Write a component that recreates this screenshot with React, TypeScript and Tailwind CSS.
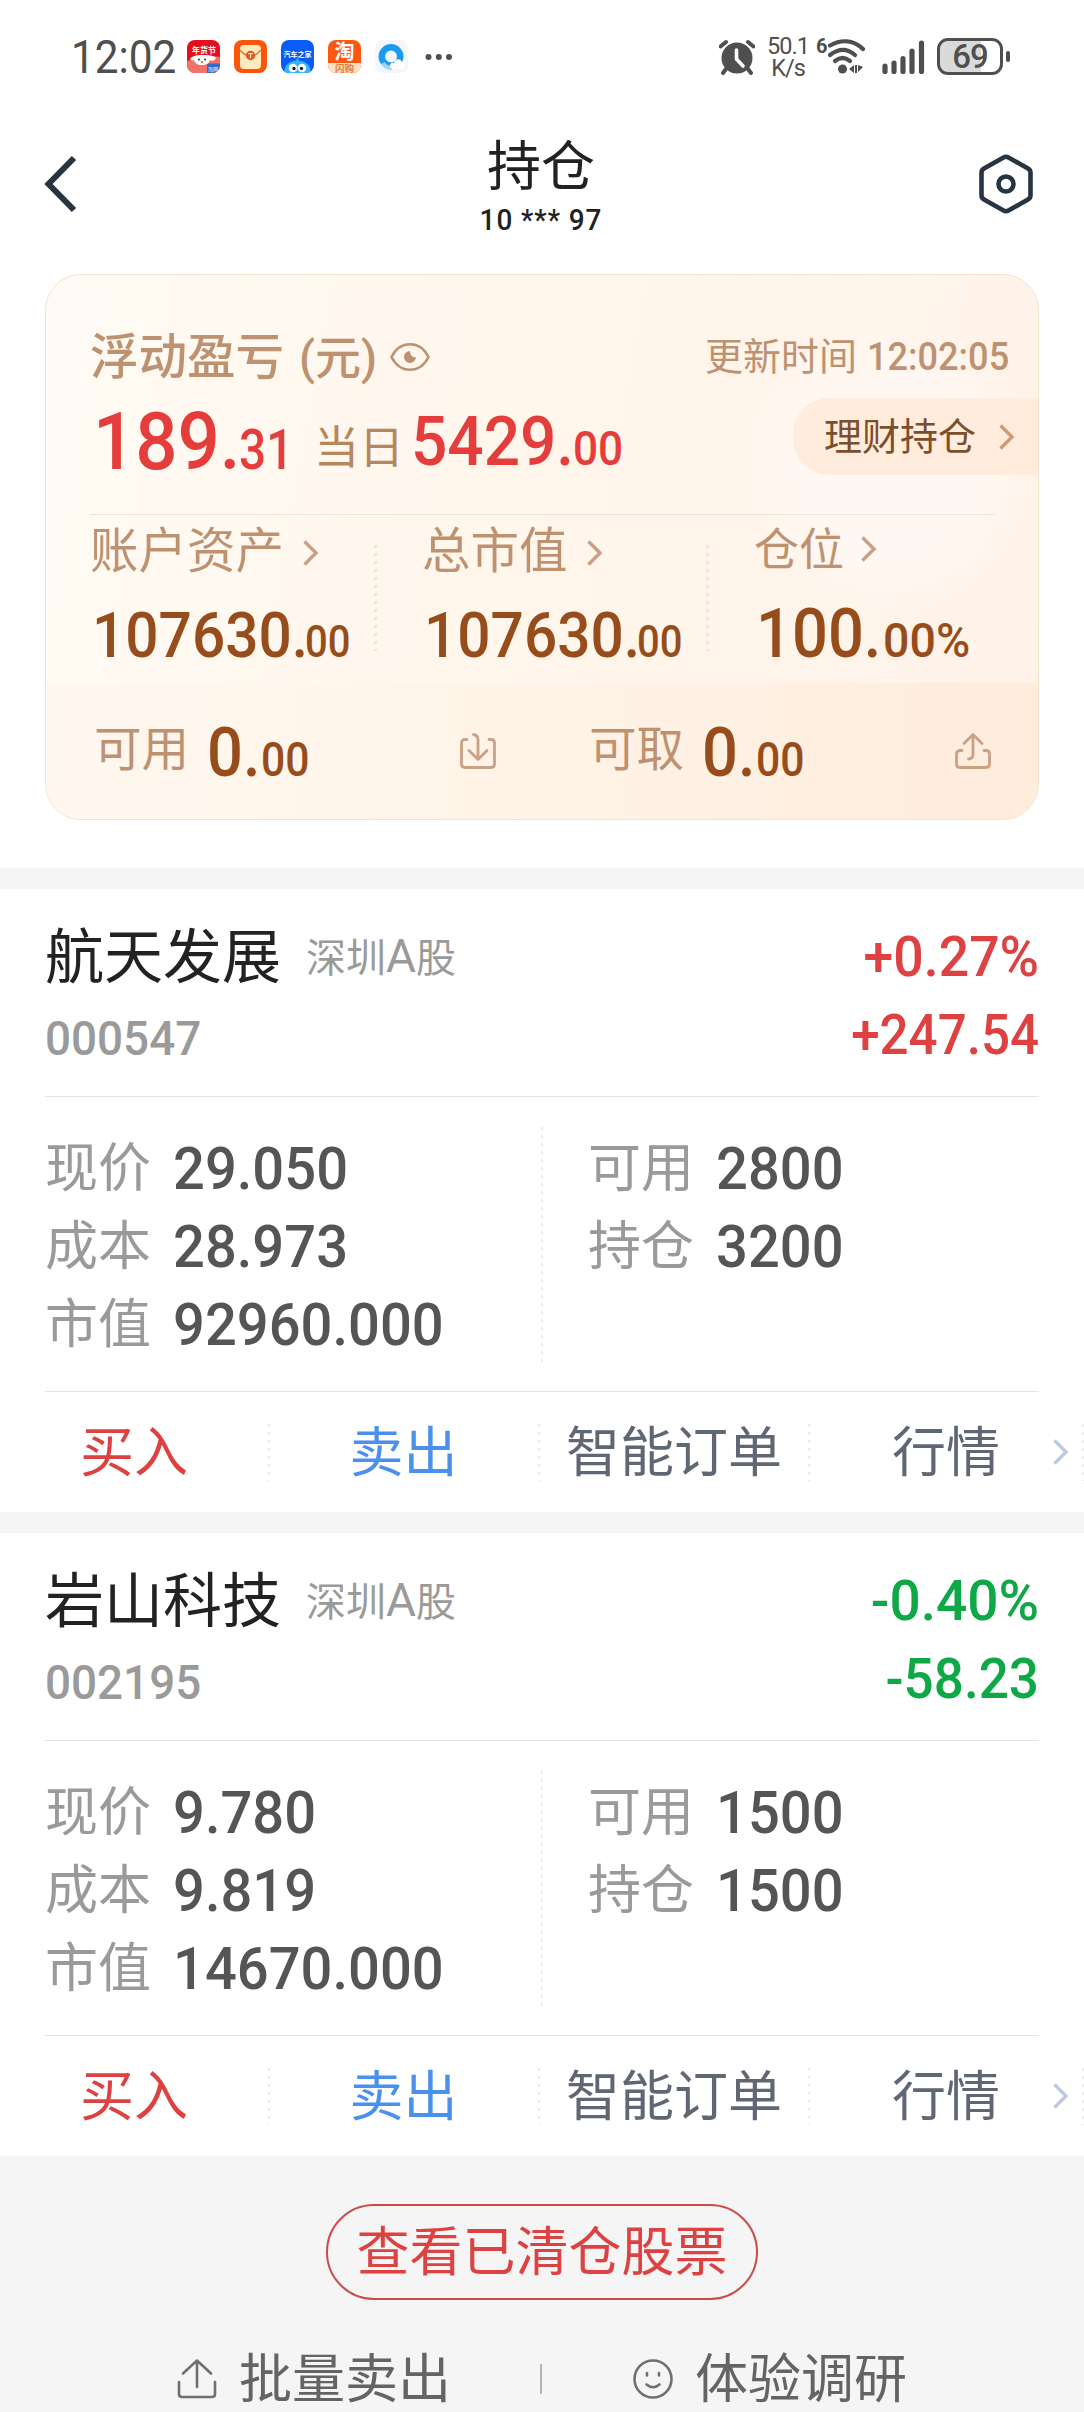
import React from "react";

type NumProps = { children: React.ReactNode; className: string; fit?: string };

function Num({ children, className, fit = "origin-left scale-x-[0.93]" }: NumProps) {
  return (
    <span className={`block shrink-0 leading-none whitespace-nowrap ${className}`}>
      <span className={`block w-max ${fit}`}>{children}</span>
    </span>
  );
}

function Chevron({ className }: { className: string }) {
  return (
    <svg viewBox="0 0 16 26" className={`h-[26px] w-4 shrink-0 ${className}`} fill="none" stroke="currentColor" strokeWidth="3.4">
      <path d="M1.5 1.5 13 13 1.5 24.5" />
    </svg>
  );
}

function StatusBar() {
  return (
    <div className="flex h-[113px] shrink-0 items-center pl-[71px] text-[#4f4f4f]">
      <Num className="mt-[1px] w-[116px] text-[46px]" fit="origin-left scale-x-[0.92]">12:02</Num>
      <div className="flex gap-[14px]">
        <svg viewBox="0 0 33 33" className="size-[33px]">
          <defs><clipPath id="appA"><rect width="33" height="33" rx="8" /></clipPath></defs>
          <g clipPath="url(#appA)">
            <rect width="33" height="33" fill="#e30f1c" />
            <path d="M0 21 8 19 16 24 26 16 33 17V33H0Z" fill="#f4716a" />
            <text x="5" y="13" fontSize="8" fontWeight="700" fill="#fff" fontFamily="Noto Sans CJK SC, sans-serif">年货节</text>
            <path d="M3 19c2-3 6-4 12-4s11 0 14 3c-2 3-4 3-6 2-1 3-3 5-8 5s-7-2-8-5c-2 1-3 0-4-1Z" fill="#fff" />
            <circle cx="12" cy="19.500" r="1" fill="#333" /><circle cx="18" cy="19.500" r="1" fill="#333" />
            <path d="M13.500 21.500h3l-1.500 2z" fill="#d33" />
            <path d="M20 25q0-1.500 1.500-1.500H33V33H20Z" fill="#2d6bd0" />
            <text x="21" y="30.500" fontSize="5" fill="#fff" fontFamily="Noto Sans CJK SC, sans-serif">淘网</text>
          </g>
        </svg>
        <svg viewBox="0 0 33 33" className="size-[33px]">
          <rect width="33" height="33" rx="8" fill="#f9560b" />
          <rect x="6" y="5" width="21" height="24" rx="4" fill="#ffe9bd" />
          <path d="M6 10c4 5 7 6 10.500 6S23 15 27 10" fill="none" stroke="#e0702a" strokeWidth="1.300" />
          <circle cx="16.500" cy="15.500" r="4.700" fill="#e2581d" />
          <path d="M14.200 13.700h4.600M16.500 13.700v4.500" stroke="#ffe9bd" strokeWidth="1.200" />
        </svg>
        <svg viewBox="0 0 33 33" className="size-[33px]">
          <defs><clipPath id="appC"><rect width="33" height="33" rx="8" /></clipPath></defs>
          <g clipPath="url(#appC)">
            <rect width="33" height="33" fill="#0b5bf6" />
            <text x="2.500" y="17" fontSize="7" fontWeight="700" fill="#fff" fontFamily="Noto Sans CJK SC, sans-serif">汽车之家</text>
            <path d="M16.500 18.500v3" stroke="#3cc1ff" strokeWidth="2" />
            <ellipse cx="16.500" cy="31" rx="13" ry="10.500" fill="#31b5fa" />
            <circle cx="12" cy="28" r="4.300" fill="#fff" /><circle cx="21" cy="28" r="4.300" fill="#fff" />
            <circle cx="13" cy="28.500" r="1.700" fill="#123" /><circle cx="20.500" cy="28.500" r="1.700" fill="#123" />
          </g>
        </svg>
        <svg viewBox="0 0 33 33" className="size-[33px]">
          <defs><clipPath id="appD"><rect width="33" height="33" rx="8" /></clipPath></defs>
          <g clipPath="url(#appD)">
            <rect width="33" height="33" fill="#fb5710" />
            <rect y="23" width="33" height="10" fill="#fde0c8" />
            <text x="6.500" y="19" fontSize="20" fontWeight="700" fill="#fff" fontFamily="Noto Sans CJK SC, sans-serif">淘</text>
            <text x="7" y="31.500" fontSize="9.500" fontWeight="700" fill="#e8772e" fontFamily="Noto Sans CJK SC, sans-serif">闪购</text>
          </g>
        </svg>
        <svg viewBox="0 0 33 33" className="size-[33px]">
          <rect width="33" height="33" rx="8" fill="#f3f7fb" />
          <circle cx="16" cy="16.500" r="9.200" fill="none" stroke="#1a9af0" strokeWidth="6.500" />
          <path d="M8 23c2 4 5 5 9 5" fill="none" stroke="#9bd5fb" strokeWidth="4" />
          <path d="M17 29c-4-2-2-7 2-6 1-5 8-5 8 0 4 0 4 6 0 6Z" fill="#fff" />
        </svg>
      </div>
      <svg viewBox="0 0 28 6" className="ml-[17px] h-[6px] w-7" fill="currentColor">
        <circle cx="3.500" cy="3" r="3" /><circle cx="13.800" cy="3" r="3" /><circle cx="24" cy="3" r="3" />
      </svg>
      <svg viewBox="0 0 36 36" className="ml-[266px] size-9">
        <circle cx="18" cy="19" r="15.500" fill="#4f4f4f" />
        <path d="M7 30 4 34M29 30l3 4" stroke="#4f4f4f" strokeWidth="4" strokeLinecap="round" />
        <path d="M1.500 7.500 7 3M34.500 7.500 29 3" stroke="#4f4f4f" strokeWidth="4" strokeLinecap="round" />
        <path d="M17.500 11v9l6.500 7" fill="none" stroke="#fff" strokeWidth="3.600" strokeLinecap="round" />
      </svg>
      <div className="ml-3 flex w-[42px] flex-col items-center text-[23.5px] leading-[22px] tracking-[-1px] text-[#4f4f4f]">
        <span>50.1</span>
        <span>K/s</span>
      </div>
      <span className="mb-[21px] ml-[7px] w-[11px] text-[20px] leading-none font-bold">6</span>
      <svg viewBox="0 0 40 36" className="h-9 w-10" fill="none" stroke="#4f4f4f" strokeWidth="4.200" strokeLinecap="round">
        <path d="M3 6.500C14 .5 26 .5 36 10" />
        <path d="M3 16c9-7 17-7 25 0" />
        <path d="M8 22c5-4 10-4 15 0" />
        <circle cx="15.500" cy="30" r="4.500" fill="#4f4f4f" stroke="none" />
        <path d="m22 30 5-4v8zM28 26h2v8h-2zM31 26l5 2-5 5z" fill="#4f4f4f" stroke="none" />
      </svg>
      <svg viewBox="0 0 44 36" className="ml-[14px] h-9 w-11" stroke="#4f4f4f" strokeWidth="5.200" strokeLinecap="round">
        <path d="M4 27v5.500M13 24v8.500M22 19.500v13M31 12v20.500M40.500 4v28.500" />
      </svg>
      <div className="ml-[12px] flex h-[37px] w-[66px] items-center justify-center rounded-[11px] border-[3px] border-[#4f4f4f] bg-[linear-gradient(90deg,#dadada_69%,#ffffff_69%)] text-[33px] leading-none font-medium tracking-[-1px]">
        69
      </div>
      <div className="ml-[3px] h-[11px] w-1 rounded-full bg-[#4f4f4f]" />
    </div>
  );
}

function Header() {
  return (
    <div className="flex h-[161px] shrink-0 items-start justify-between pr-[50px] pl-[44px] text-[#222]">
      <svg viewBox="0 0 60 60" className="mt-[41px] size-[60px]" fill="none" stroke="#263541" strokeWidth="6">
        <path d="M30 4 4.500 30 30 56" />
      </svg>
      <div className="flex flex-col items-center">
        <h1 className="mt-[28px] text-[54px] leading-none">持仓</h1>
        <Num className="mt-[10px] text-[30px] font-medium" fit="origin-center scale-x-[0.93] tracking-[1px]">10 *** 97</Num>
      </div>
      <svg viewBox="0 0 56 60" className="mt-[41px] h-[60px] w-14" fill="none" stroke="#263541" strokeWidth="4.600" strokeLinejoin="round">
        <path d="M25.500 3.500q2.500-1.500 5 0l19.500 11q2.500 1.500 2.500 4v23q0 2.500-2.500 4l-19.500 11q-2.500 1.500-5 0L6 45.500q-2.500-1.500-2.500-4v-23q0-2.500 2.500-4Z" />
        <circle cx="28" cy="30" r="7.500" />
      </svg>
    </div>
  );
}

const dottedTan = "bg-[repeating-linear-gradient(180deg,#f0e2d6_0_3px,transparent_3px_8px)]";
const dottedGray = "bg-[repeating-linear-gradient(180deg,#ececec_0_3px,transparent_3px_8px)]";

function Asset({ label, whole, cents, large }: { label: string; whole: string; cents: string; large?: boolean }) {
  return (
    <div className="flex w-[332px] shrink-0">
      <div className="w-[284px] shrink-0">
        <div className="flex h-[64px] items-center pt-[11px] text-[#be9270]">
          <span className={large ? "-mt-1 text-[45px] leading-none" : "text-[48.500px] leading-none"}>{label}</span>
          <Chevron className={large ? "-mt-2 ml-[17px] text-[#c9a084]" : "ml-[19px] text-[#c9a084]"} />
        </div>
        <div className="flex h-[89px] items-end pl-[2px] font-medium text-[#964d1b]">
          {large ? (
            <>
              <Num className="w-[127px] text-[68px]">{whole}</Num>
              <Num className="mb-[3px] w-[90px] text-[48px]" fit="origin-left scale-x-[0.97]">{cents}</Num>
            </>
          ) : (
            <>
              <Num className="mb-[1px] w-[213px] text-[63px]">{whole}</Num>
              <Num className="mb-[4px] text-[45px]" fit="origin-left scale-x-[0.89]">{cents}</Num>
            </>
          )}
        </div>
      </div>
      {!large && <div className={`mt-[30px] h-[106px] w-[3px] ${dottedTan}`} />}
    </div>
  );
}

function Cash({ label, children }: { label: string; children: React.ReactNode }) {
  return (
    <div className="flex w-[495px] shrink-0 items-center">
      <span className="w-[95px] text-[47.5px] leading-none whitespace-nowrap text-[#be9270]">{label}</span>
      <div className="mt-[3px] ml-[18px] flex items-end font-medium text-[#964d1b]">
        <Num className="w-[54px] text-[68px]">0.</Num>
        <Num className="mb-[3px] w-[50px] text-[48px]" fit="origin-left scale-x-[0.89]">00</Num>
      </div>
      <div className="ml-[149px]">{children}</div>
    </div>
  );
}

function Summary() {
  return (
    <div className="mx-[45px] flex h-[546px] shrink-0 flex-col overflow-hidden rounded-[36px] border border-[#f4e3cb] bg-[radial-gradient(circle_150px_at_840px_190px,#fff8f2_60%,transparent_100%),linear-gradient(100deg,#fffbf4_0%,#fff6ec_45%,#fff3e9_100%)]">
      <div className="flex h-[239px] shrink-0 justify-between pl-[44px]">
        <div>
          <div className="mt-[58px] flex h-12 items-center text-[#be9270]">
            <span className="pt-[2px] text-[48.500px] leading-none font-medium">浮动盈亏</span>
            <Num className="w-[106px] pt-[2px] pl-[15px] text-[46px] font-medium" fit="origin-left">(元)</Num>
            <svg viewBox="0 0 40 30" className="h-[30px] w-10 shrink-0" fill="none" stroke="currentColor" strokeWidth="2.600">
              <path d="M1.500 15C10 -2 30 -2 38.500 15 30 32 10 32 1.500 15Z" />
              <path d="M20 9a6 6 0 1 0 6 6c-3 1-6-2-6-6Z" fill="currentColor" stroke="none" />
            </svg>
          </div>
          <div className="mt-[21px] flex h-[80px] items-end font-medium text-[#e53c3c]">
            <Num className="w-[149px] pl-[3px] text-[80px]">189.</Num>
            <Num className="mb-[4px] w-[75px] text-[55px]" fit="origin-left scale-x-[0.87]">31</Num>
            <span className="mb-[11px] w-[97px] text-[45px] leading-none font-normal text-[#b4875f]">当日</span>
            <Num className="mb-[6px] w-[162px] text-[68px]" fit="origin-left scale-x-[0.94]">5429.</Num>
            <Num className="mb-[9px] text-[48px]" fit="origin-left scale-x-[0.92]">00</Num>
          </div>
        </div>
        <div className="flex flex-col items-end">
          <div className="mt-[63px] mr-[28px] flex items-center text-[#be9270]">
            <span className="text-[38px] leading-none">更新时间</span>
            <Num className="ml-[10px] w-[143px] text-[38px] font-medium" fit="origin-left scale-x-[0.95]">12:02:05</Num>
          </div>
          <div className="mt-[22px] flex h-[77px] w-[245px] items-center rounded-l-[36px] bg-[#ffecdc] pt-[1px] pl-[31px] text-[38px] leading-none text-[#7d4e2a]">
            理财持仓
            <Chevron className="ml-[23px] text-[#cb9c78]" />
          </div>
        </div>
      </div>
      <div className="ml-[44px] h-px w-[905px] shrink-0 bg-[#f0e4da]" />
      <div className="flex h-[168px] shrink-0 pl-[44px]">
        <Asset label="账户资产" whole="107630." cents="00" />
        <Asset label="总市值" whole="107630." cents="00" />
        <Asset label="仓位" whole="100." cents="00%" large />
      </div>
      <div className="flex flex-1 items-center bg-[linear-gradient(90deg,#fff8f0,#fff3e7_50%,#feecdc)] pl-[48px]">
        <Cash label="可用">
          <svg viewBox="0 0 36 36" className="size-9" fill="none" stroke="#cba184" strokeWidth="2.800" strokeLinecap="round" strokeLinejoin="round">
            <path d="M7 6.500H5Q1.500 6.500 1.500 10V31Q1.500 34.500 5 34.500H31Q34.500 34.500 34.500 31V10Q34.500 6.500 31 6.500H29" />
            <path d="M13.500 1.500Q18 2 18 7V26M9 17.500l9 9 9-9" />
          </svg>
        </Cash>
        <Cash label="可取">
          <svg viewBox="0 0 36 36" className="size-9" fill="none" stroke="#cba184" strokeWidth="2.800" strokeLinecap="round" strokeLinejoin="round">
            <path d="M7 17.500H5Q1.500 17.500 1.500 21V31Q1.500 34.500 5 34.500H31Q34.500 34.500 34.500 31V21Q34.500 17.500 31 17.500H29" />
            <path d="M13.500 26Q18 26 18 21V2M9 10.500l9-9 9 9" />
          </svg>
        </Cash>
      </div>
    </div>
  );
}

type Stock = {
  name: string;
  code: string;
  pct: string;
  gain: string;
  tone: string;
  left: [string, string][];
  right: [string, string][];
};

const stocks: Stock[] = [
  {
    name: "航天发展", code: "000547", pct: "+0.27%", gain: "+247.54", tone: "text-[#dd4141]",
    left: [["现价", "29.050"], ["成本", "28.973"], ["市值", "92960.000"]],
    right: [["可用", "2800"], ["持仓", "3200"]],
  },
  {
    name: "岩山科技", code: "002195", pct: "-0.40%", gain: "-58.23", tone: "text-[#0fa847]",
    left: [["现价", "9.780"], ["成本", "9.819"], ["市值", "14670.000"]],
    right: [["可用", "1500"], ["持仓", "1500"]],
  },
];

function Figures({ rows }: { rows: [string, string][] }) {
  return (
    <div className="pt-[31px]">
      {rows.map(([label, value]) => (
        <div key={label} className="flex h-[78px] items-center">
          <span className="w-[128px] pt-[4px] text-[53px] leading-none text-[#9a9a9a]">{label}</span>
          <Num className="mt-[3px] text-[60px] font-medium text-[#555]" fit="origin-left scale-x-[0.935]">{value}</Num>
        </div>
      ))}
    </div>
  );
}

function Holding({ stock }: { stock: Stock }) {
  const falling = stock.gain.startsWith("-");
  return (
    <section className="h-[623px] shrink-0 overflow-hidden bg-white">
      <div className="mx-[45px] flex h-[208px] justify-between border-b border-[#e5e5e5]">
        <div className="pt-[39px]">
          <div className="flex h-[59px] items-center">
            <h2 className="text-[59px] leading-none text-[#222]">{stock.name}</h2>
            <Num className="mb-[3px] ml-[25px] text-[40px] text-[#9a9a9a]" fit="flex items-baseline">
              深圳<span className="text-[46px]">A</span>股
            </Num>
          </div>
          <Num className="mt-[27px] text-[49px] font-medium text-[#9a9a9a]" fit="origin-left scale-x-[0.935]">{stock.code}</Num>
        </div>
        <div className={`flex flex-col items-end pt-[41px] font-medium ${stock.tone}`}>
          <Num className="text-[55px]" fit={falling ? "origin-right scale-x-[1]" : "origin-right scale-x-[0.975]"}>{stock.pct}</Num>
          <Num className="mt-[23px] text-[55px]" fit={falling ? "origin-right scale-x-[0.965]" : "origin-right scale-x-[0.93]"}>{stock.gain}</Num>
        </div>
      </div>
      <div className="mx-[45px] flex h-[295px] border-b border-[#e5e5e5]">
        <div className="w-[496px]"><Figures rows={stock.left} /></div>
        <div className={`mt-[30px] h-[235px] w-[2px] ${dottedGray}`} />
        <div className="ml-[45px]"><Figures rows={stock.right} /></div>
      </div>
      <div className="flex h-[120px] items-center text-[54px] leading-none text-[#5f6674]">
        <span className="w-[268px] pt-[4px] text-center text-[#dd4141]">买入</span>
        <div className={`h-[57px] w-[2px] ${dottedGray}`} />
        <span className="w-[267px] pt-[4px] text-center text-[#4a90ee]">卖出</span>
        <div className={`ml-[1px] h-[57px] w-[2px] ${dottedGray}`} />
        <span className="w-[268px] pt-[4px] text-center">智能订单</span>
        <div className={`h-[57px] w-[2px] ${dottedGray}`} />
        <span className="ml-[82px] w-[108px] pt-[4px]">行情</span>
        <Chevron className="ml-[53px] text-[#bccbdb]" />
        <div className={`ml-[13px] h-[57px] w-[2px] ${dottedGray}`} />
      </div>
    </section>
  );
}

function Footer() {
  return (
    <footer className="flex flex-1 flex-col items-center bg-[#f5f5f5] pt-[48px]">
      <button className="flex h-24 w-[432px] items-center justify-center rounded-full border-2 border-[#cc4a4a] pt-[3px] text-[53px] leading-none text-[#dd4141]">
        查看已清仓股票
      </button>
      <div className="mt-[50px] flex w-full items-center pl-[177px] text-[53px] leading-none text-[#646464]">
        <svg viewBox="0 0 40 40" className="size-10" fill="none" stroke="#707070" strokeWidth="2.600" strokeLinecap="round" strokeLinejoin="round">
          <path d="M2 23V35Q2 38 5 38H35Q38 38 38 35V23M20 28V2M6 14.500 20 1.500 34 14.500" />
        </svg>
        <span className="ml-[22px] w-[213px] pt-[4px]">批量卖出</span>
        <div className="ml-[88px] h-[30px] w-[2px] bg-[#b5b5b5]" />
        <svg viewBox="0 0 40 40" className="ml-[91px] size-10" fill="none" stroke="#707070" strokeWidth="2.600" strokeLinecap="round">
          <circle cx="20" cy="20" r="18.500" />
          <path d="M14 14v2.500M26 14v2.500M13.500 25.500q6.500 5.500 13 0" />
        </svg>
        <span className="ml-[22px] pt-[4px]">体验调研</span>
      </div>
    </footer>
  );
}

export default function App() {
  return (
    <main className="flex h-[2412px] w-[1084px] flex-col overflow-hidden bg-white font-[Roboto,'Noto_Sans_CJK_SC',sans-serif]">
      <StatusBar />
      <Header />
      <Summary />
      <div className="mt-[48px] h-[21px] shrink-0 bg-[#f5f5f5]" />
      <Holding stock={stocks[0]} />
      <div className="h-[21px] shrink-0 bg-[#f5f5f5]" />
      <Holding stock={stocks[1]} />
      <Footer />
    </main>
  );
}
